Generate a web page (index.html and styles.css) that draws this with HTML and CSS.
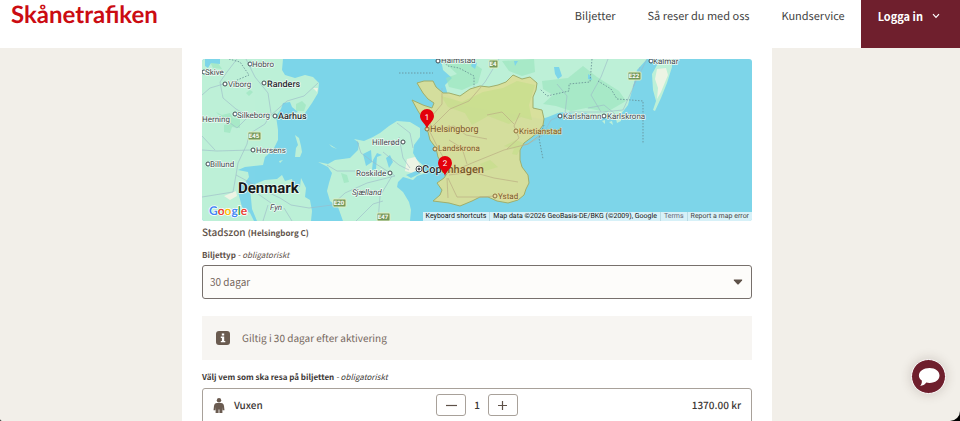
FILE: index.html
```html
<!DOCTYPE html>
<html lang="sv">
<head>
<meta charset="utf-8">
<meta name="viewport" content="width=device-width, initial-scale=1">
<title>Skånetrafiken</title>
<link rel="stylesheet" href="styles.css">
</head>
<body>
<div class="shell">
  <header class="header">
    <a class="logo" href="#">Skånetrafiken</a>
    <nav class="nav">
      <a href="#">Biljetter</a>
      <a href="#">Så reser du med oss</a>
      <a href="#">Kundservice</a>
    </nav>
    <button class="login" type="button">Logga in
      <svg class="chevron" viewBox="0 0 8 6" aria-hidden="true"><path d="M1 1.2 4 4.4 7 1.2"/></svg>
    </button>
  </header>
  <main class="main">
    <form class="ticket">
      <div class="map">
        <svg class="map-art" viewBox="0 0 550 162" preserveAspectRatio="xMidYMid slice" role="img" aria-label="Karta">
          <!-- Jutland, Funen and Zealand -->
          <g class="land">
            <path d="M0 0H81L80 11 83 16 93 19 103 16 111 18 117 24 116 34 110 44 103 54 101 60 95 61 92 59 91 54 96 53 90 48 88 43 81 44 79 50 74 57 76 71V81L71 91 63 98 61 106 43 108 36 111 46 113 47 118 43 124 38 127 36 133 40 148 48 154 52 162H0Z"/>
            <path d="M48 129 53 125 63 121 75 120 80 116 83 122 90 120 92 127 98 128 99 119 104 129 103 138 108 141 110 152 109 162H55L50 150Z"/>
            <path d="M93 76 97 79 99 87 100 93 98 98 93 98 94 89 96 86Z"/>
            <path d="M57 101 60 99 60 102ZM77 102 81 101 78 104ZM127 85 135 90 130 88Z"/>
            <path d="M116 103 126 105 133 101 148 99 156 91 157 84 152 80 162 82 171 78 178 74 187 67 195 62 208 63 218 69 218 78 212 86 211 94 215 101 222 107 224 114 215 117 211 121 201 118 196 123 195 128 201 133 207 143 209 151 208 162H141L136 148 128 142 125 132 127 124 130 114 126 108Z"/>
            <path d="M239 0 241 11 250 19 243 26 246 36 262 47 340 60 346 58 356 54 363 53 376 56 384 54 391 59 400 57 405 60 413 56 415 64 419 62 419 55 426 46 431 28 435 11 445 0Z"/>
            <path d="M455 6 460 0 470 0 470 8 465 24 459 39 453 52 451 51 454 42 451 31 450 15Z"/>
            <path d="M400 62 403 61 403 65ZM407 63 410 62 411 66Z"/>
          </g>
          <g class="forest">
            <path d="M14 53 20 56 28 54 31 59 38 60 38 69 30 68 28 74 22 73 22 66 29 64 20 59ZM94 45 100 42 104 46 102 52 94 52ZM44 34 48 31 51 33 47 37ZM8 3 16 4 20 10 11 9ZM139 114 145 116 147 123 142 124Z"/>
            <path d="M241 2 265 0 280 10 276 24 260 31 247 28 244 19 255 15ZM300 2 332 0 333 13 320 17 307 12ZM340 22 366 19 381 7 395 18 417 32 424 42 405 53 384 49 369 52 354 47 341 45 351 36 341 30Z"/>
          </g>
          <g class="pale">
            <path d="M455 10 464 9 466 16 459 33 455 40 456 29 453 20ZM111 29 116 29 115 33ZM22 137 34 132 35 137 28 141Z"/>
            <path d="M205 100 213 98 219 107 222 113 214 115 203 112Z"/>
          </g>
          <g class="lakes">
            <path d="M3 0H18V5L9 4 6 9 3 7ZM32 54 41 55 43 58 37 57ZM352 8 357 8 360 17 356 20 353 15ZM386 15 389 17 390 21 386 20ZM271 2 275 4 273 10 269 7ZM312 2 316 2 313 7ZM161 95 169 91 170 103 164 107ZM175 94 180 96 175 98 174 110 170 111 171 101ZM184 99 188 96 191 103 187 109ZM204 116 214 112 219 114 209 119Z"/>
          </g>
          <g class="roads">
            <path d="M44 0 53 18 66 34 69 54 63 65 47 75 45 85 36 104 34 116 31 133 0 138M0 91 15 92 49 91M0 77 13 91M35 0 25 13 18 23 21 39 34 50 46 57 67 57M68 57 85 42 102 37 116 24M25 24 8 29 0 36M46 58 35 69 24 61M34 116 49 124 61 131 78 139 89 146 107 149 130 146 143 134 165 124 193 117M66 146 61 162M82 149 90 162M49 130 69 144M125 106 135 112 153 112M155 82 159 94 171 103 193 117M197 78 201 99 208 109M195 64 208 74 211 89M181 93 197 106 207 111M190 117 178 137 176 162M154 162 171 145 181 142"/>
            <path d="M240 29 240 45 230 57 227 71 236 89 245 105 249 113 270 104 302 91 326 85 340 77 349 61 368 53 400 53 421 51 431 29 438 8M229 69 248 50 267 42 283 23 297 0M229 71 252 67 264 76 285 80M247 116 270 113 292 119 316 123M245 119 246 139M246 119 255 138 278 138 293 137M265 105 260 89 247 81M305 90 317 79 312 67 318 54M285 56 300 53 312 65M399 53 389 36 399 18 406 0M363 54 365 37 355 25M431 28 445 0M413 55 402 46 386 49"/>
          </g>
          <path class="region" d="M215 24 222 22 231 22 234 28 241 34 247 34 258 37 268 30 278 27 287 28 296 26 304 23 311 16 320 20 328 18 335 24 334 31 331 38 331 49 340 51 342 60 341 66 336 73 330 78 322 84 318 91 318 101 320 108 326 116 327 124 324 130 322 136 316 141 306 144 295 142 286 138 278 138 270 142 258 147 247 144 231 142 238 136 240 131 235 124 242 119 246 113 241 106 236 98 234 89 228 81 226 73 223 63 216 52 210 41 221 46 230 49 232 44 226 40 221 34Z"/>
          <path class="region-woods" d="M239 37 260 43 281 33 301 29 315 22 333 26 327 46 330 61 319 58 307 65 286 57 270 66 263 54 246 48ZM302 87 314 81 321 84 315 96 310 95 312 90ZM278 105 288 101 296 108 283 112Z"/>
          <path class="region-roads" d="M240 34 240 45 230 57 227 71 236 89 245 105 249 113 270 104 302 91 326 85 338 76M229 69 248 50 267 42 279 28M229 71 252 67 264 76 285 80M247 116 270 113 292 119 316 123M245 119 246 139M246 119 255 138 278 138 293 137M265 105 260 89 247 81M305 90 317 79 312 67 318 54M285 56 300 53 312 65"/>
          <g class="borders">
            <path d="M197 14H231M239 1 246 7 257 9 272 17 272 28M342 66 337 79 341 100M390 0 388 23 367 25 367 32 345 37 338 30M396 22 409 30 415 40 429 41 441 42V85M27 0 38 3 47 16 33 22"/>
          </g>
          <g class="shields">
            <rect x="46" y="73" width="13" height="8" rx="1"/><rect x="131" y="140" width="13" height="8" rx="1"/><rect x="175" y="154" width="13" height="8" rx="1"/><rect x="287" y="1" width="9" height="8" rx="1"/><rect x="426" y="13" width="13" height="8" rx="1"/>
          </g>
          <g class="shield-text">
            <text x="52" y="79">E45</text><text x="137" y="146">E20</text><text x="181" y="160">E47</text><text x="291" y="7">E4</text><text x="432" y="19">E22</text>
          </g>
          <g class="dots">
            <circle cx="48" cy="5" r="2"/><circle cx="2" cy="13" r="2"/><circle cx="23" cy="25" r="2"/><circle cx="62" cy="24" r="2"/><circle cx="33" cy="55" r="2"/><circle cx="73" cy="57" r="2"/><circle cx="51" cy="91" r="2"/><circle cx="6" cy="105" r="2"/><circle cx="201" cy="83" r="2"/><circle cx="188" cy="114" r="2"/><circle cx="236" cy="2" r="2"/><circle cx="449" cy="2" r="2"/><circle cx="358" cy="57" r="2"/><circle cx="402" cy="57" r="2"/>
            <circle cx="217" cy="110" r="3"/><circle class="dot-core" cx="217" cy="110" r="1"/>
          </g>
          <g class="city">
            <text x="50" y="8">Hobro</text><text x="3" y="16">Skive</text><text x="26" y="28">Viborg</text><text x="35" y="59">Silkeborg</text><text x="0" y="63">Herning</text><text x="54" y="94">Horsens</text><text x="8" y="108">Billund</text><text x="170" y="86">Hillerød</text><text x="154" y="117">Roskilde</text><text x="239" y="4">Halmstad</text><text x="451" y="5">Kalmar</text><text x="361" y="60">Karlshamn</text><text x="405" y="60">Karlskrona</text>
            <text class="town" x="65" y="28">Randers</text><text class="town" x="76" y="60">Aarhus</text>
            <text class="island" x="68" y="151">Fyn</text><text class="island" x="150" y="136">Sjælland</text>
            <text class="country" x="36" y="134">Denmark</text>
          </g>
          <g class="dots tinted"><circle cx="225" cy="70" r="2"/><circle cx="314" cy="72" r="2"/><circle cx="233" cy="90" r="2"/><circle cx="293" cy="137" r="2"/></g>
          <g class="city tinted">
            <text class="helsingborg" x="228" y="73">Helsingborg</text><text x="236" y="92">Landskrona</text><text x="296" y="140">Ystad</text><text x="317" y="75">Kristianstad</text>
            <text class="capital" x="220" y="114"><tspan class="capital-sea">Cop</tspan>enhagen</text>
          </g>
          <g class="pin">
            <path d="M225 70C224 65 218 62 218 57A7 7 0 0 1 232 57C232 62 226 65 225 70Z"/>
            <path d="M243 117C242 112 236 109 236 104A7 7 0 0 1 250 104C250 109 244 112 243 117Z"/>
            <text x="225" y="61">1</text><text x="243" y="107">2</text>
          </g>
          <text class="google" x="7" y="156"><tspan class="g-blue">G</tspan><tspan class="g-red">o</tspan><tspan class="g-yellow">o</tspan><tspan class="g-blue">g</tspan><tspan class="g-green">l</tspan><tspan class="g-red">e</tspan></text>
        </svg>
        <div class="map-credit">
          <button type="button">Keyboard shortcuts</button>
          <span>Map data ©2026 GeoBasis-DE/BKG (©2009), Google</span>
          <a href="#">Terms</a>
          <a class="report" href="#">Report a map error</a>
        </div>
      </div>
      <p class="zone">Stadszon <span>(Helsingborg C)</span></p>
      <label class="label" for="type">Biljettyp <em>- obligatoriskt</em></label>
      <div class="select">
        <select id="type"><option>30 dagar</option></select>
        <svg viewBox="0 0 10 6" aria-hidden="true"><path d="M1.2.5H8.8Q9.6.7 9.1 1.5L5.7 5.2Q5 5.8 4.3 5.2L.9 1.5Q.4.7 1.2.5Z"/></svg>
      </div>
      <div class="info">
        <svg viewBox="0 0 14 14" aria-hidden="true"><rect width="14" height="14" rx="3"/><path class="info-mark" d="M5.8 2.6H8.2V4.6H5.8ZM4.8 5.6H8.2V10H9.3V11.3H4.8V10H5.9V6.9H4.8Z"/></svg>
        <span>Giltig i 30 dagar efter aktivering</span>
      </div>
      <p class="label dark" id="who">Välj vem som ska resa på biljetten <em>- obligatoriskt</em></p>
      <div class="traveller" role="group" aria-labelledby="who">
        <div class="who">
          <svg viewBox="0 0 12 15" aria-hidden="true"><circle cx="6" cy="2.3" r="2.2"/><path d="M4 5H8Q10.6 5 11 8L11.5 12.300H9.700L9.400 9V15H6.400V11.500H5.600V15H2.600V9L2.300 12.300H.5L1 8Q1.400 5 4 5Z"/></svg>
          <span>Vuxen</span>
        </div>
        <div class="stepper">
          <button type="button" aria-label="Minska"><svg viewBox="0 0 11 11"><path d="M0 5.5H11"/></svg></button>
          <output>1</output>
          <button type="button" aria-label="Öka"><svg viewBox="0 0 11 11"><path d="M1 5.5H10M5.5 1V10"/></svg></button>
        </div>
        <span class="price">1370.00 kr</span>
      </div>
    </form>
  </main>
  <button class="chat" type="button" aria-label="Chatt">
    <svg viewBox="0 0 22 20" aria-hidden="true"><path d="M11.5 1C17.5 1 21.5 4.3 21.5 8.6S17.5 16 11.5 16C10.300 16 9.200 15.900 8.200 15.600 6.800 17.700 4.700 18.900 2.200 19 3.500 17.700 4 16 3.800 13.600 1.900 12.300.9 10.600.9 8.600.9 4.300 5.500 1 11.500 1Z"/></svg>
  </button>
</div>
</body>
</html>
```

FILE: styles.css
```css
* { box-sizing: border-box; }

html { background: #000; }

body {
  margin: 0;
  font-family: "Noto Sans CJK SC", "Open Sans", sans-serif;
  font-size: 11px;
  line-height: 16px;
  color: #5e5148;
  text-rendering: geometricPrecision;
}

a { color: inherit; text-decoration: none; }
button, select { font: inherit; color: inherit; }
p { margin: 0; }

.shell {
  position: relative;
  display: flex;
  flex-direction: column;
  height: 100vh;
  overflow: hidden;
  background: #f2efe9;
  border-radius: 0 0 10px 2px;
}

.header {
  display: flex;
  flex: none;
  height: 48px;
  background: #fff;
}

.logo {
  margin: 1px auto 0 11px;
  font-family: Lato, sans-serif;
  font-size: 24px;
  font-weight: 700;
  line-height: 28px;
  color: #cb0c12;
}

.nav {
  display: flex;
  gap: 32px;
  padding: 8px 16px 0 0;
  color: #3f3f3f;
}

.login {
  display: flex;
  gap: 9px;
  align-items: center;
  padding: 8px 20px 24px 17px;
  border: 0;
  background: #6f1f2d;
  color: #fff;
  font-weight: 700;
}

.chevron {
  width: 8px;
  fill: none;
  stroke: #fff;
  stroke-width: 1.2;
}

.main {
  display: flex;
  flex: 1;
  justify-content: center;
  min-height: 0;
  padding-right: 6px;
}

.ticket {
  width: 100%;
  max-width: 590px;
  padding: 11px 20px;
  background: #fff;
}

.map {
  position: relative;
  overflow: hidden;
  border-radius: 3px;
  background: #7dd5e9;
  font-family: Roboto, sans-serif;
}

.map-art { display: block; width: 100%; }

.land { fill: #bdf0d7; }
.forest { fill: #98e5bc; opacity: .6; }
.pale { fill: #edf4e4; }
.lakes { fill: #7dd5e9; }
.roads { fill: none; stroke: #9cb9c8; stroke-width: .8; opacity: .75; }
.region { fill: #d9de99; fill-opacity: .95; stroke: #9fae6c; stroke-width: 1; }
.region-woods { fill: #c3dd88; opacity: .6; }
.region-roads { fill: none; stroke: #bdb486; stroke-width: .8; }
.borders { fill: none; stroke: #648b92; stroke-width: .8; stroke-dasharray: 1.5 1.5; }
.shields { fill: #73985a; stroke: #e0efc4; stroke-width: 1; }
.shield-text { fill: #fff; font-size: 6px; font-weight: 700; text-anchor: middle; }
.dots { fill: #fff; stroke: #40484e; stroke-width: 1; }
.dot-core { fill: #222; }
.dots.tinted { fill: #ecd9a4; stroke: #8c713b; }

.city {
  fill: #454a50;
  font-size: 8px;
  paint-order: stroke;
  stroke: #effcf5;
  stroke-width: 1.5px;
  stroke-linejoin: round;
}

.city.tinted { fill: #75592c; stroke: #e8dc9c; stroke-width: 1px; }
.town { font-size: 9px; font-weight: 500; fill: #272c30; }
.helsingborg { font-size: 9px; }
.island { font-style: italic; }
.capital { font-size: 11px; font-weight: 500; }
.capital-sea { fill: #272c30; stroke: #effcf5; }
.country { font-size: 15px; font-weight: 700; fill: #16191b; }

.pin { fill: #e3000b; }
.pin text { fill: #fff; font-size: 8px; text-anchor: middle; }

.google {
  font-family: Lato, sans-serif;
  font-size: 12px;
  font-weight: 700;
  paint-order: stroke;
  stroke: #fff;
  stroke-width: 1.5px;
}

.g-blue { fill: #4285f4; }
.g-red { fill: #ea4335; }
.g-yellow { fill: #fbbc05; }
.g-green { fill: #34a853; }

.map-credit {
  position: absolute;
  right: 0;
  bottom: 0;
  display: flex;
  background: rgba(245, 250, 252, .75);
  font-size: 7px;
  line-height: 9px;
  color: #111;
  white-space: nowrap;
}

.map-credit > * { padding: 0 3px; border: 0; background: none; }
.map-credit > * + * { border-left: 1px solid #b9dce5; }
.map-credit a { color: #667; }
.map-credit .report { color: #444; }

.zone {
  margin-top: 3px;
  font-size: 10px;
  font-weight: 500;
}

.zone span {
  font-size: 8px;
  font-weight: 700;
  line-height: 8px;
}

.label {
  display: block;
  margin-top: 8px;
  font-size: 8px;
  font-weight: 700;
}

.label em { font-weight: 400; }
.label.dark { margin-top: 10px; color: #3b3634; }

.select {
  position: relative;
  margin-top: 1px;
}

.select select {
  display: block;
  width: 100%;
  height: 34px;
  padding: 0 7px;
  appearance: none;
  border: 1px solid #77706c;
  border-radius: 3px;
  background: #fdfcfa;
  font-size: 10px;
  color: #75675d;
}

.select svg {
  position: absolute;
  top: 14px;
  right: 9px;
  width: 10px;
  fill: #5e5148;
  pointer-events: none;
}

.info {
  display: flex;
  gap: 12px;
  align-items: center;
  margin-top: 17px;
  padding: 14px;
  background: #f7f5f2;
  font-size: 10px;
  color: #75675d;
}

.info svg { width: 14px; fill: #6a5b50; }
.info .info-mark { fill: #fff; }

.traveller {
  display: grid;
  grid-template-columns: 1fr auto 1fr;
  align-items: center;
  margin-top: 2px;
  padding: 5px 10px 12px;
  border: 1px solid #a8a19a;
  border-radius: 3px;
  font-size: 10px;
  font-weight: 500;
  color: #3b3634;
}

.who { display: flex; gap: 9px; align-items: center; }
.who svg { width: 12px; fill: #6a5b50; }

.stepper { display: flex; gap: 8px; align-items: center; }

.stepper button {
  display: flex;
  align-items: center;
  justify-content: center;
  width: 30px;
  height: 22px;
  padding: 0;
  border: 1px solid #a8a19a;
  border-radius: 3px;
  background: #fff;
}

.stepper svg { width: 11px; stroke: #5e5148; stroke-width: 1.2; }

.price { text-align: right; }

.chat {
  position: absolute;
  right: 14px;
  bottom: 27px;
  display: flex;
  align-items: center;
  justify-content: center;
  width: 35px;
  height: 35px;
  padding: 0;
  border: 1px solid #fff;
  border-radius: 50%;
  background: #6f1f2d;
  box-shadow: 0 0 12px rgba(60, 40, 30, .2);
}

.chat svg { width: 22px; fill: #fff; }
```
